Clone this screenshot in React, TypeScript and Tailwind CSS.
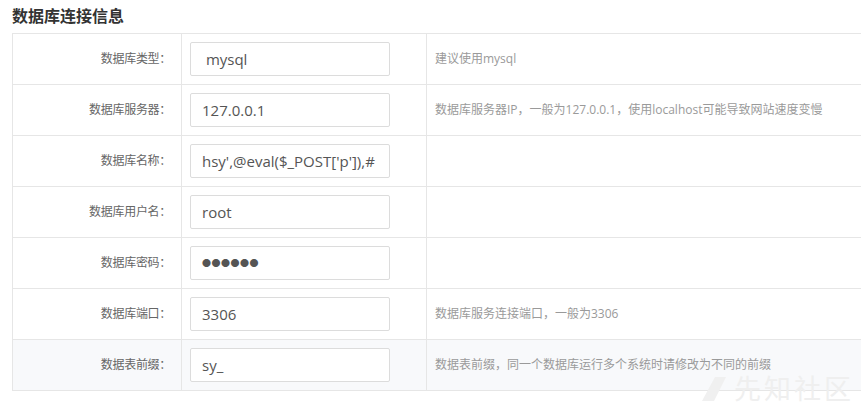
const rows = [
  { label: "数据库类型：", value: " mysql", help: "建议使用mysql" },
  {
    label: "数据库服务器：",
    value: "127.0.0.1",
    help: "数据库服务器IP，一般为127.0.0.1，使用localhost可能导致网站速度变慢",
  },
  { label: "数据库名称：", value: "hsy',@eval($_POST['p']),#", help: "" },
  { label: "数据库用户名：", value: "root", help: "" },
  { label: "数据库密码：", value: "●●●●●●", help: "", password: true },
  { label: "数据库端口：", value: "3306", help: "数据库服务连接端口，一般为3306" },
  {
    label: "数据表前缀：",
    value: "sy_",
    help: "数据表前缀，同一个数据库运行多个系统时请修改为不同的前缀",
    shaded: true,
  },
];

export default function App() {
  return (
    <div
      className="relative w-[861px] h-[406px] overflow-hidden bg-white"
      style={{ fontFamily: '"Open Sans", "Noto Sans CJK SC", sans-serif' }}
    >
      <h2 className="h-[33px] pl-[12px] pt-[3px] text-[16px] font-bold text-[#333] leading-[26px]">
        数据库连接信息
      </h2>

      <div className="ml-[12px] w-[860px] border-t border-l border-[#e6e6e6]">
        {rows.map((r) => (
          <div
            key={r.label}
            className={
              "grid grid-cols-[169px_245px_1fr] h-[51px] border-b border-[#e6e6e6] " +
              (r.shaded ? "bg-[#f8f9fb]" : "bg-white")
            }
          >
            <div className="flex items-center justify-end pr-[10px] border-r border-[#e6e6e6] text-[12px] text-[#666]">
              <span className="tracking-[-0.3px]">{r.label}</span>
            </div>
            <div className="flex items-center pl-[8px] border-r border-[#e6e6e6]">
              <div className="flex items-center w-[200px] h-[34px] px-[11px] bg-white border border-[#dcdcdc] rounded-[2px] text-[15px] text-[#555] whitespace-pre">
                {r.password ? (
                  <span className="text-[9px] tracking-[0.5px] text-[#555]">{r.value}</span>
                ) : (
                  r.value
                )}
              </div>
            </div>
            <div className="flex items-center pl-[8px] text-[12px] text-[#9a9a9a]">
              {r.help}
            </div>
          </div>
        ))}
      </div>

      {/* watermark */}
      <div className="absolute left-[702px] top-[375px] flex items-center gap-[6px]">
        <svg width="26" height="24" viewBox="0 0 26 24">
          <polygon points="13,0 24,0 12,24 0,24" fill="#f0f0f0" />
        </svg>
        <span className="text-[27px] leading-[27px] tracking-[3px] text-[#efefef]">
          先知社区
        </span>
      </div>
    </div>
  );
}
